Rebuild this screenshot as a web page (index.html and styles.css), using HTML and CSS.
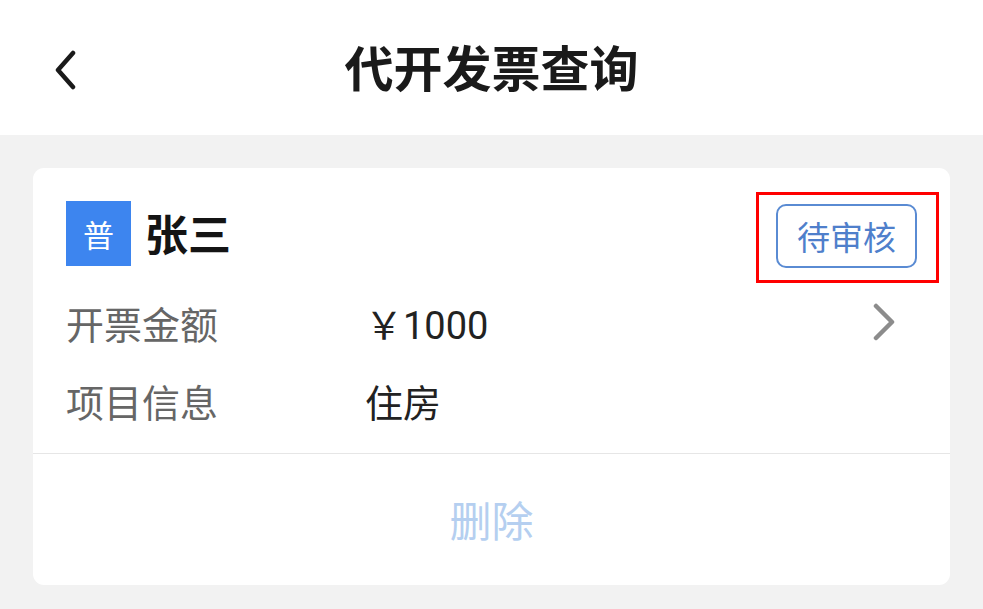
FILE: index.html
```html
<!DOCTYPE html>
<html lang="zh-CN">
<head>
<meta charset="utf-8">
<title>代开发票查询</title>
<link rel="stylesheet" href="styles.css">
</head>
<body>
<header class="topbar">
  <div class="back">
    <svg width="26" height="40" viewBox="0 0 26 40"><path d="M21 3 L6 20 L21 37" fill="none" stroke="#1a1a1a" stroke-width="4.5" stroke-linecap="round" stroke-linejoin="round"/></svg>
  </div>
  <h1 class="title">代开发票查询</h1>
  <div class="spacer"></div>
</header>
<main class="content">
  <section class="card">
    <div class="card-body">
      <div class="card-head">
        <div class="who">
          <span class="badge">普</span>
          <span class="name">张三</span>
        </div>
        <div class="status">待审核<span class="highlight"></span></div>
      </div>
      <div class="row">
        <span class="label">开票金额</span>
        <span class="value money">￥1000</span>
        <svg class="arrow" width="24" height="38" viewBox="0 0 24 38"><path d="M4 3 L20 19 L4 35" fill="none" stroke="#8c8c8c" stroke-width="4.5" stroke-linecap="round" stroke-linejoin="round"/></svg>
      </div>
      <div class="row">
        <span class="label">项目信息</span>
        <span class="value">住房</span>
      </div>
    </div>
    <div class="card-foot">删除</div>
  </section>
</main>
</body>
</html>
```
FILE: styles.css
```css
* { box-sizing: border-box; }
html, body { margin: 0; padding: 0; }
body {
  background: #f2f2f2;
  font-family: "Noto Sans CJK SC", "Noto Sans", sans-serif;
  width: 983px;
  height: 609px;
  overflow: hidden;
}
.topbar {
  height: 135px;
  background: #ffffff;
  display: grid;
  grid-template-columns: 120px 1fr 120px;
  align-items: center;
}
.back {
  padding-left: 52px;
  display: flex;
  align-items: center;
  height: 40px;
  margin-top: 4px;
}
.title {
  margin: 0;
  text-align: center;
  font-size: 49px;
  font-weight: 700;
  color: #1a1a1a;
  line-height: 60px;
  margin-top: -3px;
}
.content {
  padding: 33px 33px 0 33px;
}
.card {
  background: #ffffff;
  border-radius: 11px;
  height: 417px;
  display: flex;
  flex-direction: column;
}
.card-body {
  padding: 33px 33px 23px 33px;
  border-bottom: 1px solid #e6e6e6;
}
.card-head {
  display: flex;
  align-items: center;
  justify-content: space-between;
  height: 65px;
}
.who {
  display: flex;
  align-items: center;
  gap: 14px;
}
.badge {
  width: 65px;
  height: 65px;
  background: #3d85ef;
  color: #ffffff;
  font-size: 31px;
  display: flex;
  align-items: center;
  justify-content: center;
  line-height: 1;
}
.name {
  font-size: 43px;
  font-weight: 700;
  color: #141414;
  line-height: 1;
  margin-top: -2px;
}
.status {
  position: relative;
  width: 141px;
  height: 64px;
  border: 2.5px solid #5a8bd3;
  border-radius: 10px;
  color: #4f7fcb;
  font-size: 33px;
  display: flex;
  align-items: center;
  justify-content: center;
  line-height: 1;
  margin-top: 5px;
}
.highlight {
  position: absolute;
  top: -14px;
  left: -22px;
  right: -24px;
  bottom: -17px;
  border: 3px solid #ff0000;
}
.row {
  display: flex;
  align-items: center;
  height: 60px;
  margin-top: 18px;
  font-size: 38px;
}
.card-head + .row { margin-top: 26px; }
.label {
  width: 299px;
  color: #666666;
}
.value {
  color: #222222;
  flex: 1;
}
.money {
  font-family: Roboto, "Noto Sans CJK SC", sans-serif;
  font-size: 38px;
}
.arrow {
  margin-right: 21px;
}
.card-foot {
  flex: 1;
  display: flex;
  align-items: center;
  justify-content: center;
  font-size: 42px;
  color: #b5cff0;
  padding-bottom: 2px;
}
```
